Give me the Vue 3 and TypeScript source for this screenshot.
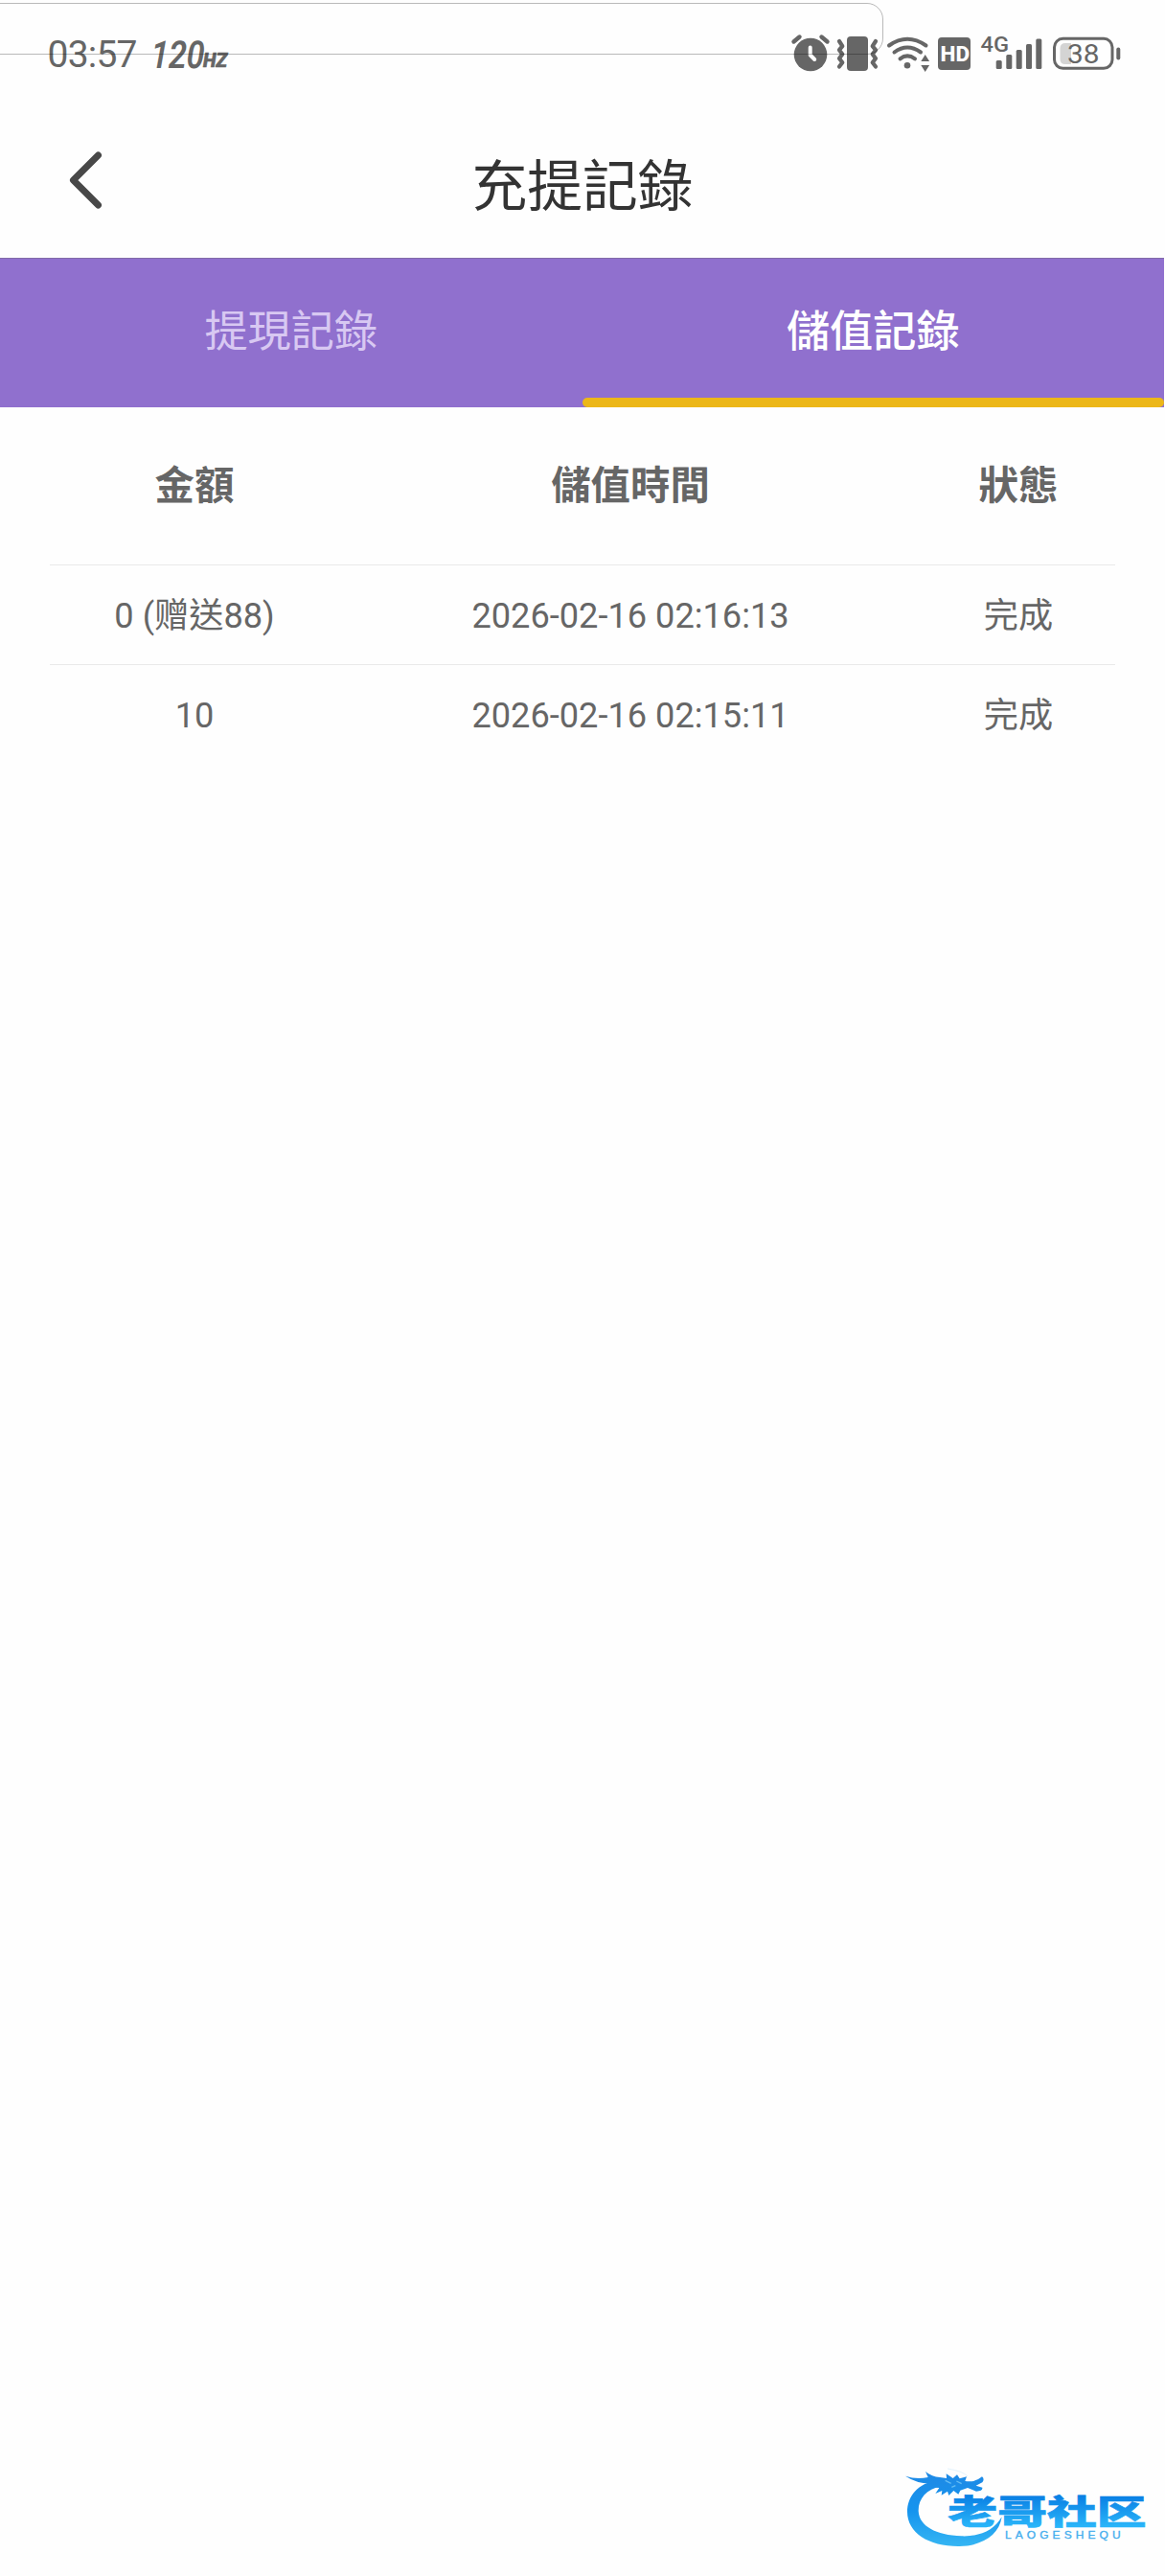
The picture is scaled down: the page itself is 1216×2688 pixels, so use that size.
<script setup lang="ts">
import { ref } from 'vue'

interface RecordRow {
  amount: string
  time: string
  status: string
}

const tabs: string[] = ['提現記錄', '儲值記錄']
const active = ref<number>(1)
const columns: string[] = ['金額', '儲值時間', '狀態']
const rows: RecordRow[] = [
  { amount: '0 (赠送88)', time: '2026-02-16 02:16:13', status: '完成' },
  { amount: '10', time: '2026-02-16 02:15:11', status: '完成' },
]
</script>

<template>
  <div class="screen">
    <div class="status-bar">
      <svg class="status-left" width="300" height="110" viewBox="0 0 300 110">
        <text x="49.5" y="70" class="clock" textLength="94">03:57</text>
        <g transform="translate(157 70.5) skewX(-2)">
          <text x="0" y="0" class="rate" textLength="56" lengthAdjust="spacingAndGlyphs">120</text>
        </g>
        <text x="212" y="69.5" class="hertz" textLength="25" lengthAdjust="spacingAndGlyphs">HZ</text>
      </svg>
      <svg class="status-right" width="436" height="110" viewBox="780 0 436 110">
        <!-- alarm -->
        <g fill="none" stroke="#666" stroke-width="4.4" stroke-linecap="round">
          <circle cx="846" cy="57" r="17.3" fill="#666" stroke="none" />
          <path d="M828.5 43.500l6-5M857.500 38.500l6 5" />
          <path d="M845.700 49.500v8l4.500 4.500" stroke="#fefefe" stroke-width="4" stroke-linejoin="round" />
        </g>
        <!-- vibrate -->
        <rect x="884" y="38" width="22" height="36" rx="4" fill="#666" />
        <g fill="none" stroke="#666" stroke-width="4.200" stroke-linecap="round" stroke-linejoin="round">
          <path d="M876 43l3.300 5.200-3.300 4 3.300 4.300-3.300 4.500 3.300 4.200-3.300 4.300" />
          <path d="M914 43l-3.300 5.200 3.300 4-3.300 4.300 3.300 4.500-3.300 4.200 3.300 4.300" />
        </g>
        <!-- wifi -->
        <g fill="none" stroke="#666" stroke-width="4" stroke-linecap="round">
          <path d="M928 47.500Q947 34 966.500 47.500" />
          <path d="M933.500 54.500Q947 44.500 961 54.500" />
          <path d="M939.500 61.300Q947 55.500 955 61.300" />
        </g>
        <circle cx="947" cy="68.300" r="3.300" fill="#666" />
        <path d="M961.300 64l4.400-7 4.400 7zM961.300 68h8.800l-4.400 7z" fill="#666" />
        <!-- HD -->
        <rect x="979" y="39" width="34" height="34" rx="4" fill="#666" />
        <text x="981.500" y="64" class="hd" textLength="30.500" lengthAdjust="spacingAndGlyphs">HD</text>
        <!-- mobile signal -->
        <text x="1023.500" y="53.500" class="net" textLength="29.500" lengthAdjust="spacingAndGlyphs">4G</text>
        <g fill="#666">
          <rect x="1039.700" y="63" width="6" height="9" rx="1.500" />
          <rect x="1050.300" y="57" width="6" height="15" rx="1.500" />
          <rect x="1060.700" y="52" width="6" height="20" rx="1.500" />
          <rect x="1071" y="46" width="6" height="26" rx="1.500" />
          <rect x="1081.300" y="40.500" width="6" height="31.500" rx="1.500" />
        </g>
        <!-- battery -->
        <rect x="1100.500" y="40.300" width="60.500" height="31" rx="9" fill="none" stroke="#666" stroke-width="3" />
        <path d="M1112 45h6v22h-6q-5.500 0-5.500-5.500v-11q0-5.500 5.500-5.500z" fill="#d4d4d4" />
        <rect x="1165.300" y="49.500" width="4" height="13" rx="2" fill="#666" />
        <text x="1114" y="66.300" class="level" textLength="33.500" lengthAdjust="spacingAndGlyphs">38</text>
      </svg>
      <div class="frame"></div>
    </div>

    <header class="nav">
      <svg class="back" width="40" height="66" viewBox="0 0 40 66">
        <path d="M33.500 7L7.500 33L33.500 59" fill="none" stroke="#484848" stroke-width="7" stroke-linecap="round" stroke-linejoin="round" />
      </svg>
      <h1>充提記錄</h1>
    </header>

    <nav class="tabs">
      <div v-for="(tab, i) in tabs" :key="tab" class="tab" :class="{ active: i === active }" @click="active = i">
        {{ tab }}
      </div>
    </nav>

    <main class="records">
      <div class="row head">
        <div v-for="c in columns" :key="c">{{ c }}</div>
      </div>
      <div v-for="r in rows" :key="r.time" class="row">
        <div>{{ r.amount }}</div>
        <div>{{ r.time }}</div>
        <div>{{ r.status }}</div>
      </div>
    </main>

    <svg class="brand" width="286" height="128" viewBox="0 0 858 384">
      <defs>
        <linearGradient id="ring" gradientUnits="userSpaceOnUse" x1="0" y1="70" x2="0" y2="290">
          <stop offset="0" stop-color="#1e8ae6" />
          <stop offset=".5" stop-color="#1594ee" />
          <stop offset="1" stop-color="#35b5f3" />
        </linearGradient>
        <linearGradient id="word" gradientUnits="userSpaceOnUse" x1="0" y1="-88" x2="0" y2="10">
          <stop offset="0" stop-color="#0a80e4" />
          <stop offset="1" stop-color="#2bb7fa" />
        </linearGradient>
      </defs>
      <path fill="url(#ring)" d="M150 84C82 92 51 137 51 183C51 249 119 292 214 291C285 289 338 258 347 199C323 241 279 261 221 259C141 257 88 228 86 181C85 143 111 112 157 103Z" />
      <path fill="url(#ring)" d="M45 71Q80 83 116 75L108 57Q128 74 153 75L174 78L173 64L194 78L207 67L215 79L237 73L232 87Q264 92 285 73Q294 80 286 91L266 101L286 107Q288 119 267 119L240 108L217 116L211 128L196 117L181 132L177 119L158 131L160 117L139 126L151 108L112 105L130 94Q85 97 45 71Z" />
      <path d="M177 48Q224 55 240 72" fill="none" stroke="#d3ebfb" stroke-width="2" />
      <path d="M170 85l18 9M205 87l16 8M190 106l12-5" fill="none" stroke="#64bdf4" stroke-width="4" />
      <g transform="translate(178 223) scale(1.48 1)">
        <text x="0" y="0" class="brand-name" textLength="420">老哥社区</text>
      </g>
      <text x="357" y="266" class="brand-latin" textLength="374" lengthAdjust="spacingAndGlyphs">LAOGESHEQU</text>
    </svg>
  </div>
</template>

<style>
body {
  background: #fefefe;
}
</style>

<style scoped>
.screen {
  width: 1216px;
  height: 2688px;
  display: flex;
  flex-direction: column;
  overflow: hidden;
  background: #fefefe;
  color: #666;
  font-family: Roboto, "Noto Sans CJK TC", "Noto Sans CJK SC", sans-serif;
}
.status-bar {
  position: relative;
  display: flex;
  justify-content: space-between;
  height: 110px;
}
.frame {
  position: absolute;
  top: 3px;
  left: -20px;
  width: 940px;
  height: 52px;
  border: 1px solid rgba(0, 0, 0, 0.27);
  border-radius: 17px;
}
svg text {
  fill: #666;
  font-family: Roboto, sans-serif;
}
svg .clock {
  font-size: 39px;
}
svg .rate {
  font-size: 40px;
  font-weight: 600;
  font-style: italic;
}
svg .hertz {
  font-size: 19.5px;
  font-weight: 800;
  font-style: italic;
  stroke: #666;
  stroke-width: 0.7px;
}
svg .hd {
  fill: #fefefe;
  font-size: 22px;
  font-weight: 800;
}
svg .net {
  font-size: 22.5px;
  font-weight: 500;
}
svg .level {
  font-size: 28.5px;
}
.nav {
  position: relative;
  height: 159px;
  display: flex;
  justify-content: center;
}
.back {
  position: absolute;
  left: 69px;
  top: 45px;
}
h1 {
  margin: 0;
  padding-top: 45px;
  font-size: 57.8px;
  line-height: 80px;
  font-weight: 400;
  color: #333;
}
.tabs {
  display: flex;
  width: 1215px;
  height: 156px;
  box-sizing: border-box;
  border-top: 1px solid #826ba9;
  background: #9070ce;
}
.tab {
  flex: 1;
  display: flex;
  flex-direction: column;
  align-items: center;
  justify-content: space-between;
  padding-top: 44px;
  font-size: 45.2px;
  line-height: 66px;
  color: #d8c8f2;
}
.tab.active {
  color: #fff;
  font-weight: 500;
}
.tab.active::after {
  content: "";
  width: 100%;
  height: 10px;
  border-radius: 5px;
  background: #ecb718;
}
.records {
  width: 1112px;
  margin: 0 52px;
}
.row {
  display: grid;
  grid-template-columns: 302px 608px 202px;
  align-items: center;
  height: 104px;
  box-sizing: border-box;
  border-top: 1.5px solid #e9e9e9;
  padding-top: 3px;
  font-size: 36.2px;
  line-height: 52px;
  text-align: center;
}
.row.head {
  height: 164px;
  padding: 0 0 1px;
  border-top: 0;
  font-size: 41.4px;
  font-weight: 700;
}
.brand {
  margin: auto 0 0 930px;
}
svg .brand-name {
  font-family: "Noto Sans CJK SC", sans-serif;
  font-weight: 900;
  font-size: 105px;
  fill: url(#word);
  stroke: url(#word);
  stroke-width: 2px;
}
svg .brand-latin {
  font-family: "Liberation Sans", sans-serif;
  font-size: 32px;
  letter-spacing: 11px;
  font-weight: 400;
  fill: #45aeee;
  stroke: #45aeee;
  stroke-width: 1px;
}
</style>
